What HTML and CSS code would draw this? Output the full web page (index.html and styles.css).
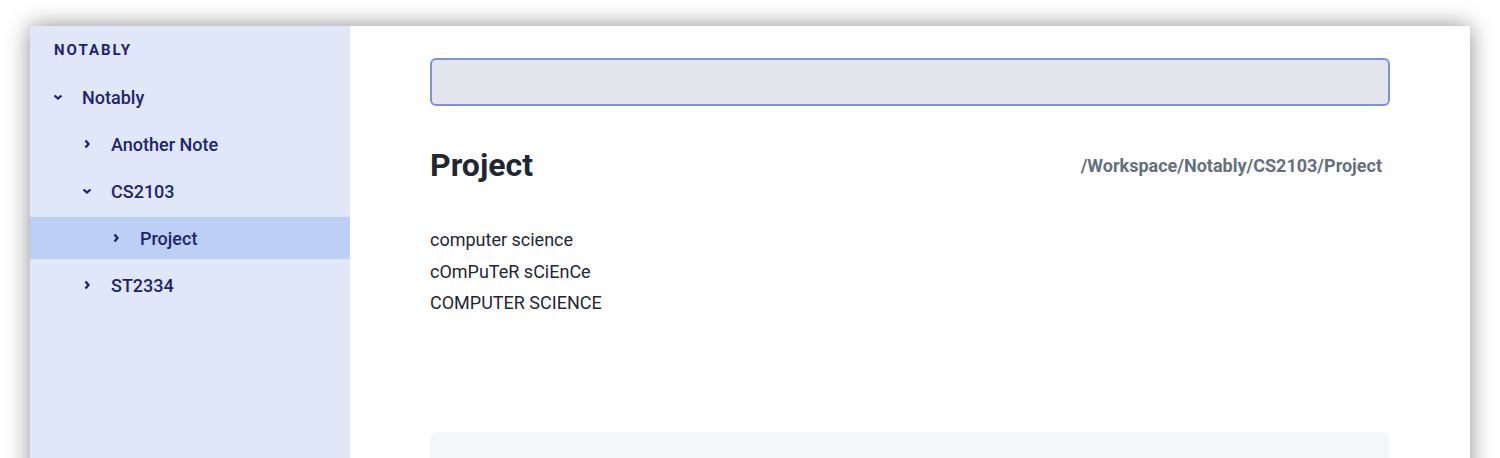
FILE: index.html
```html
<!DOCTYPE html>
<html>
<head>
<meta charset="utf-8">
<link rel="stylesheet" href="styles.css">
</head>
<body>
<div class="window">
  <aside class="sidebar">
    <div class="brand">NOTABLY</div>
    <ul class="tree">
      <li class="row lvl1"><svg class="chev" viewBox="0 0 10 10"><path d="M1.5 3.5 L5 6.5 L8.5 3.5"/></svg><span>Notably</span></li>
      <li class="row lvl2"><svg class="chev" viewBox="0 0 10 10"><path d="M3.5 1.5 L6.5 5 L3.5 8.5"/></svg><span>Another Note</span></li>
      <li class="row lvl2"><svg class="chev" viewBox="0 0 10 10"><path d="M1.5 3.5 L5 6.5 L8.5 3.5"/></svg><span>CS2103</span></li>
      <li class="row lvl3 active"><svg class="chev" viewBox="0 0 10 10"><path d="M3.5 1.5 L6.5 5 L3.5 8.5"/></svg><span>Project</span></li>
      <li class="row lvl2"><svg class="chev" viewBox="0 0 10 10"><path d="M3.5 1.5 L6.5 5 L3.5 8.5"/></svg><span>ST2334</span></li>
    </ul>
  </aside>
  <main class="main">
    <div class="search"></div>
    <div class="titlebar">
      <h1 class="title">Project</h1>
      <div class="path">/Workspace/Notably/CS2103/Project</div>
    </div>
    <div class="content">
      <p>computer science</p>
      <p>cOmPuTeR sCiEnCe</p>
      <p>COMPUTER SCIENCE</p>
    </div>
    <div class="panel"></div>
  </main>
</div>
</body>
</html>
```
FILE: styles.css
```css
html, body {
  margin: 0;
  padding: 0;
  height: 458px;
  overflow: hidden;
  background: #ffffff;
}
body {
  padding: 26px 30px 0;
  box-sizing: border-box;
  font-family: Roboto, "Liberation Sans", sans-serif;
}
.window {
  display: flex;
  height: 600px;
  background: #ffffff;
  box-shadow: 0 0 22px rgba(0, 0, 0, 0.45);
}
.sidebar {
  width: 320px;
  flex: none;
  background: #e0e7f8;
  color: #1c2470;
}
.brand {
  padding: 16px 0 0 24px;
  height: 34px;
  font-size: 15px;
  font-weight: 700;
  letter-spacing: 2px;
  line-height: 16px;
}
.tree {
  list-style: none;
  margin: 0;
  padding: 0;
  display: flex;
  flex-direction: column;
  gap: 5px;
}
.row {
  height: 42px;
  display: flex;
  align-items: center;
  font-size: 18px;
  font-weight: 500;
}
.row.active {
  background: #bccff5;
}
.chev {
  width: 10px;
  height: 10px;
  margin-right: 19px;
  fill: none;
  stroke: #1c2470;
  stroke-width: 2.3;
}
.lvl1 { padding-left: 23px; }
.lvl2 { padding-left: 52px; }
.lvl3 { padding-left: 81px; }

.main {
  flex: 1;
  padding: 32px 80px 0;
  display: flex;
  flex-direction: column;
}
.search {
  height: 44px;
  border: 2px solid #7b93dc;
  border-radius: 6px;
  background: #e2e6ec;
}
.titlebar {
  display: flex;
  justify-content: space-between;
  align-items: center;
  margin-top: 40px;
  padding-right: 8px;
}
.title {
  margin: 0;
  font-size: 32px;
  font-weight: 700;
  color: #1f2733;
  line-height: 38px;
}
.path {
  font-size: 18px;
  font-weight: 700;
  color: #64707f;
}
.content {
  margin-top: 40px;
  color: #1f2733;
  font-size: 18px;
}
.content p {
  margin: 0;
  line-height: 31.5px;
}
.panel {
  margin-top: 113px;
  height: 100px;
  background: #f5f6fa;
  border-radius: 6px;
}
```
